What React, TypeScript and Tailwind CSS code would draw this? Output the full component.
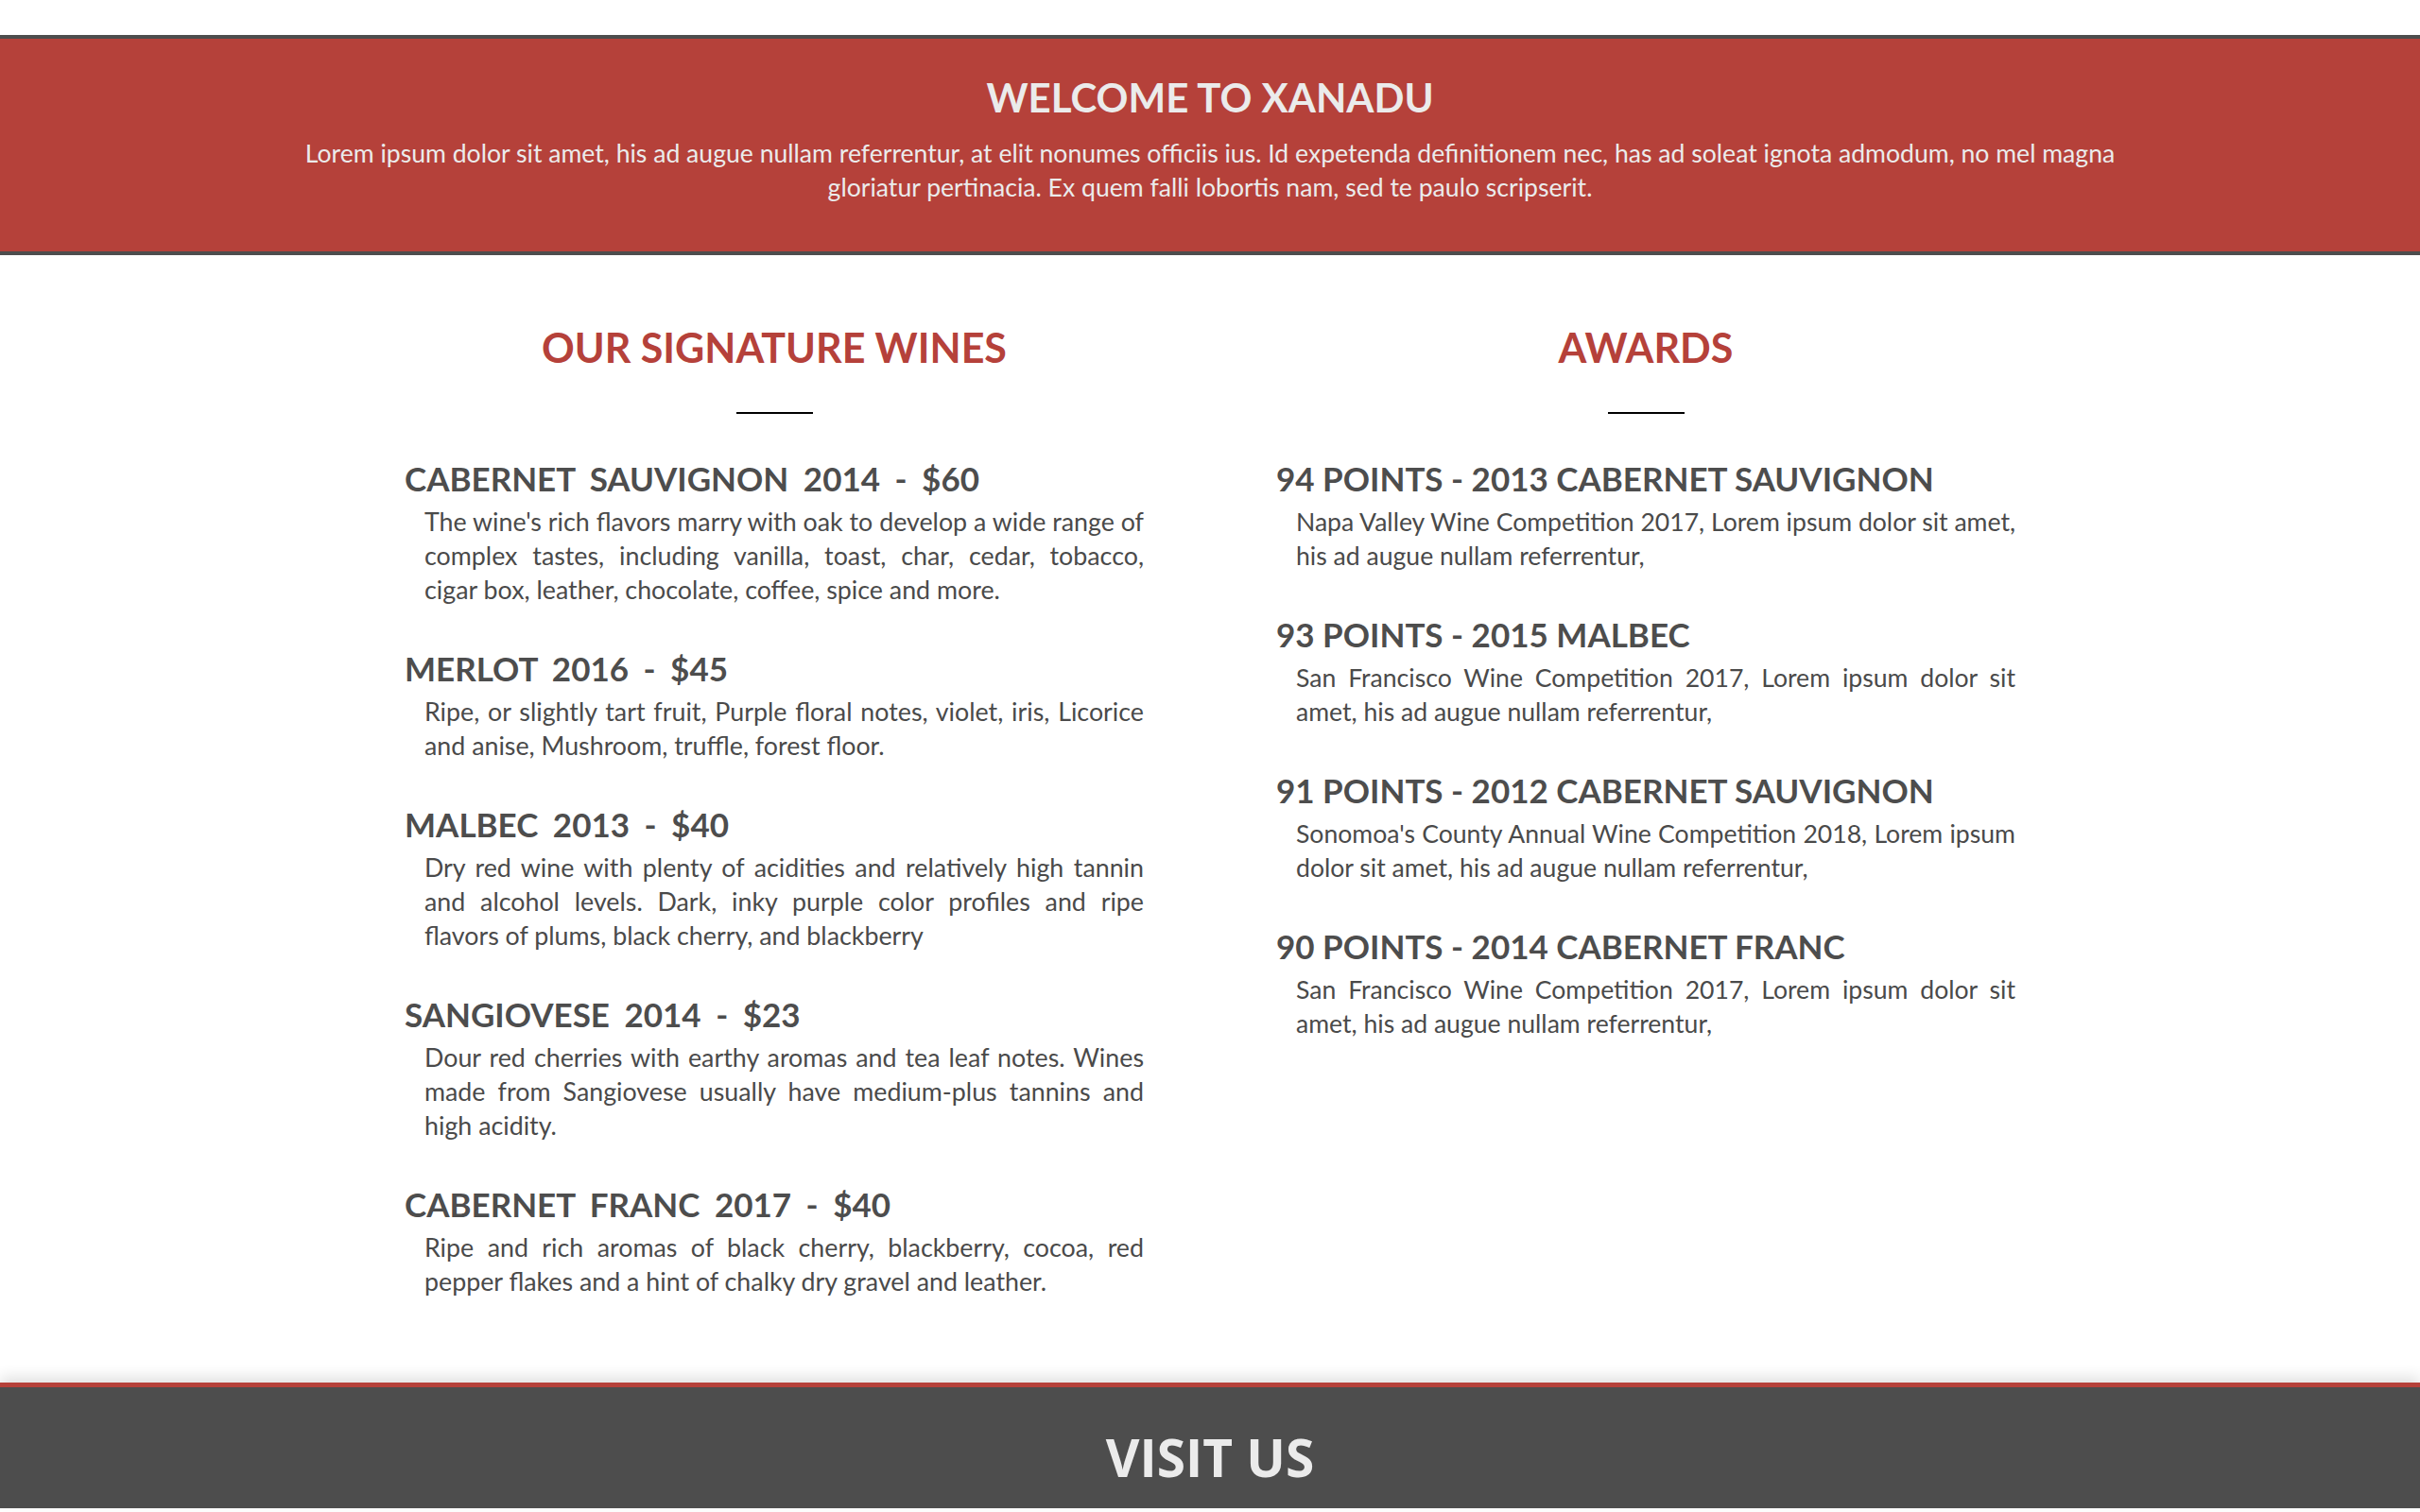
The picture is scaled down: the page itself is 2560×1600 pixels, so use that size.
import React from 'react';

const wines = [
  {
    title: 'CABERNET SAUVIGNON 2014 - $60',
    text: "The wine's rich flavors marry with oak to develop a wide range of complex tastes, including vanilla, toast, char, cedar, tobacco, cigar box, leather, chocolate, coffee, spice and more."
  },
  {
    title: 'MERLOT 2016 - $45',
    text: 'Ripe, or slightly tart fruit, Purple floral notes, violet, iris, Licorice and anise, Mushroom, truffle, forest floor.'
  },
  {
    title: 'MALBEC 2013 - $40',
    text: 'Dry red wine with plenty of acidities and relatively high tannin and alcohol levels. Dark, inky purple color profiles and ripe flavors of plums, black cherry, and blackberry'
  },
  {
    title: 'SANGIOVESE 2014 - $23',
    text: 'Dour red cherries with earthy aromas and tea leaf notes. Wines made from Sangiovese usually have medium-plus tannins and high acidity.'
  },
  {
    title: 'CABERNET FRANC 2017 - $40',
    text: 'Ripe and rich aromas of black cherry, blackberry, cocoa, red pepper flakes and a hint of chalky dry gravel and leather.'
  }
];

const awards = [
  {
    title: '94 POINTS - 2013 CABERNET SAUVIGNON',
    text: 'Napa Valley Wine Competition 2017, Lorem ipsum dolor sit amet, his ad augue nullam referrentur,'
  },
  {
    title: '93 POINTS - 2015 MALBEC',
    text: 'San Francisco Wine Competition 2017, Lorem ipsum dolor sit amet, his ad augue nullam referrentur,'
  },
  {
    title: '91 POINTS - 2012 CABERNET SAUVIGNON',
    text: "Sonomoa's County Annual Wine Competition 2018, Lorem ipsum dolor sit amet, his ad augue nullam referrentur,"
  },
  {
    title: '90 POINTS - 2014 CABERNET FRANC',
    text: 'San Francisco Wine Competition 2017, Lorem ipsum dolor sit amet, his ad augue nullam referrentur,'
  }
];

function Column({
  heading,
  items,
  spaced



}: {heading: string;items: {title: string;text: string;}[];spaced?: boolean;}) {
  return (
    <div className="w-[782px]">
      <h2 className="text-center text-[43px] leading-[55px] font-bold text-[#b5413a]">
        {heading}
      </h2>
      <div className="mx-auto mt-[41px] h-[2px] w-[81px] bg-black"></div>
      <div className="mt-[45px] flex flex-col gap-[42px]">
        {items.map((item, index) =>
        <div key={index}>
            <h3
            className={
            'text-[35px] leading-[46px] font-bold text-[#4d4d4d] ' + (
            spaced ? '[word-spacing:7px]' : '')
            }>
            
              {item.title}
            </h3>
            <p
            className={
            'mt-[5px] pl-[21px] text-justify leading-[36px] text-[#4a4a4a] ' + (
            spaced ? 'text-[26.8px]' : 'text-[26.6px]')
            }>
            
              {item.text}
            </p>
          </div>
        )}
      </div>
    </div>);

}

export default function App() {
  return (
    <div className="min-h-[1600px] bg-white font-['Lato','Liberation_Sans',sans-serif]">
      <div className="h-[37px]"></div>

      <header className="border-y-4 border-[#4d4d4d] bg-[#b5413a] pt-[35px] pb-[50px] text-center text-[#ebebeb]">
        <h1 className="text-[42px] leading-[55px] font-bold">WELCOME TO XANADU</h1>
        <p className="mx-auto mt-[13px] max-w-[1960px] text-[26.6px] leading-[36px]">
          Lorem ipsum dolor sit amet, his ad augue nullam referrentur, at elit nonumes officiis
          ius. Id expetenda definitionem nec, has ad soleat ignota admodum, no mel magna gloriatur
          pertinacia. Ex quem falli lobortis nam, sed te paulo scripserit.
        </p>
      </header>

      <main className="flex justify-center gap-[140px] pt-[70px] pb-[89px]">
        <Column heading="OUR SIGNATURE WINES" items={wines} spaced />
        <Column heading="AWARDS" items={awards} />
      </main>

      <footer className="h-[133px] border-t-[5px] border-[#b5413a] bg-[#4d4d4d] pt-[42px] text-center shadow-[0_-6px_14px_rgba(0,0,0,0.12)]">
        <h2 className="font-['Open_Sans',sans-serif] text-[55px] leading-[64px] font-bold text-[#ebebeb]">
          VISIT US
        </h2>
      </footer>
    </div>);

}
